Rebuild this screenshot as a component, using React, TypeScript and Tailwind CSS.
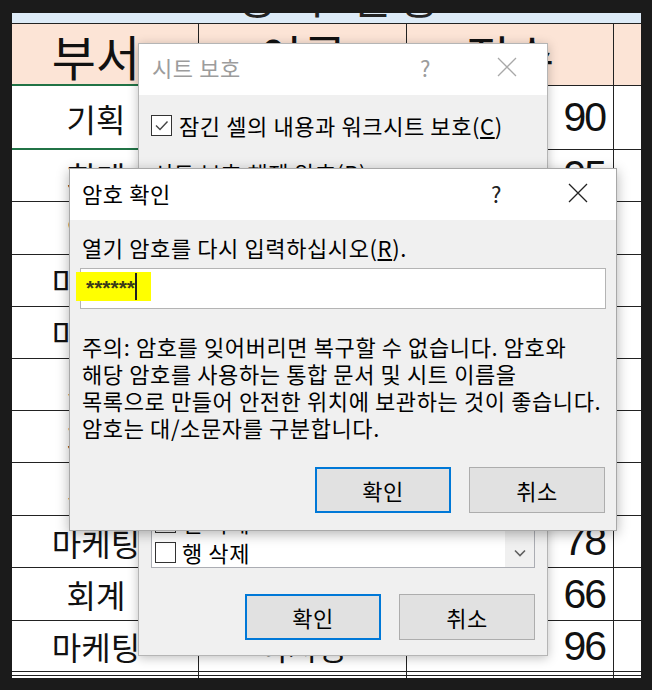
import React from "react";

const KR = "font-['Noto_Sans_CJK_KR','Noto_Sans',sans-serif]";

type Row = { dept: string; name: string; score: number; h: string; selected?: boolean };

const rows: Row[] = [
  { dept: "기획", name: "김민준", score: 90, h: "h-[64px]", selected: true },
  { dept: "회계", name: "이서연", score: 95, h: "h-[52px]" },
  { dept: "인사", name: "박도윤", score: 82, h: "h-[53px]" },
  { dept: "마케팅", name: "최하은", score: 74, h: "h-[52px]" },
  { dept: "마케팅", name: "정시우", score: 88, h: "h-[52px]" },
  { dept: "기획", name: "강지호", score: 91, h: "h-[52px]" },
  { dept: "회계", name: "조서윤", score: 69, h: "h-[52px]" },
  { dept: "기획", name: "윤예준", score: 85, h: "h-[53px]" },
  { dept: "마케팅", name: "장수아", score: 78, h: "h-[52px]" },
  { dept: "회계", name: "임주원", score: 66, h: "h-[53px]" },
  { dept: "마케팅", name: "이지영", score: 96, h: "h-[51px]" },
];

const cols = "grid grid-cols-[187px_208px_207px_27px]";

function CloseIcon({ color }: { color: string }) {
  return (
    <svg width="20" height="20" viewBox="0 0 20 20">
      <path d="M1 1 L19 19 M19 1 L1 19" stroke={color} strokeWidth="1.3" fill="none" />
    </svg>
  );
}

function CheckBox({ checked }: { checked?: boolean }) {
  return (
    <div className="w-[21px] h-[21px] border border-[#333] bg-white flex items-center justify-center shrink-0">
      {checked && (
        <svg width="15" height="15" viewBox="0 0 15 15">
          <path d="M2 7.5 L6 11.5 L13.5 3.5" stroke="#444" strokeWidth="1.4" fill="none" />
        </svg>
      )}
    </div>
  );
}

function Button({ label, primary }: { label: string; primary?: boolean }) {
  return (
    <div
      className={`w-[136px] h-[46px] bg-[#e1e1e1] flex items-center justify-center text-[22px] leading-none text-black ${
        primary ? "border-2 border-[#0078d7]" : "border border-[#adadad]"
      }`}
    >
      {label}
    </div>
  );
}

function Sheet() {
  return (
    <div className={`w-[629px] h-[665px] bg-white overflow-hidden flex flex-col ${KR}`}>
      <div className="h-[11px] bg-[#ddebf7] border-b border-[#222] overflow-hidden flex justify-center">
        <div className="text-[44px] leading-none -mt-[40px] text-[#222] tracking-[8px] pl-[30px]">성적 현황</div>
      </div>
      <div className={`${cols} h-[62px] bg-[#fce4d6] border-b border-[#222]`}>
        <div className="border-r border-[#222] flex items-center justify-center pr-[18px] text-[48px] leading-none text-[#111]">부서</div>
        <div className="border-r border-[#222] flex items-center justify-center text-[48px] leading-none text-[#111]">이름</div>
        <div className="border-r border-[#222] flex items-center justify-center text-[48px] leading-none text-[#111]">점수</div>
        <div />
      </div>
      {rows.map((r, i) => (
        <div key={i} className={`${cols} ${r.h} border-b border-[#222]`}>
          <div className="relative border-r border-[#222] flex items-center justify-center pr-[18px] text-[32px] leading-none text-[#111]">
            {r.dept}
            {r.selected && <div className="absolute inset-x-0 -top-[2px] -bottom-[1px] border-y-2 border-[#217346]" />}
          </div>
          <div className="border-r border-[#222] flex items-center justify-center text-[32px] leading-none text-[#111]">{r.name}</div>
          <div className="border-r border-[#222] flex items-center justify-end pr-[8px] text-[41px] leading-none tracking-[-2px] text-[#111] font-['Liberation_Sans',sans-serif]">
            {r.score}
          </div>
          <div />
        </div>
      ))}
      <div className={`${cols} h-[3px]`}>
        <div className="border-r border-[#222]" />
        <div className="border-r border-[#222]" />
        <div className="border-r border-[#222]" />
        <div />
      </div>
      <div className={`${cols} h-[3px] border-t border-[#222]`}>
        <div className="border-r border-[#222]" />
        <div className="border-r border-[#222]" />
        <div className="border-r border-[#222]" />
        <div />
      </div>
    </div>
  );
}

const listItems = [
  "잠긴 셀 선택",
  "잠기지 않은 셀 선택",
  "셀 서식",
  "열 서식",
  "행 서식",
  "열 삽입",
  "행 삽입",
  "하이퍼링크 삽입",
  "열 삭제",
  "행 삭제",
];

function ProtectDialog() {
  return (
    <div
      className={`absolute left-[138px] top-[43px] w-[410px] h-[613px] bg-[#f0f0f0] border border-[#b5b5b5] shadow-[0_2px_10px_rgba(0,0,0,0.25)] flex flex-col tracking-[0.6px] ${KR}`}
    >
      <div className="h-[51px] bg-white flex items-center pl-[13px] pr-[30px] pb-[5px] shrink-0">
        <span className="text-[22px] leading-none text-[#9c9c9c]">시트 보호</span>
        <span className="ml-auto mr-[66px] text-[22px] leading-none text-[#9c9c9c]">?</span>
        <CloseIcon color="#a8a8a8" />
      </div>
      <div className="flex items-center gap-[7px] pl-[12px] mt-[18px] text-[22px] leading-[24px] text-black whitespace-nowrap">
        <CheckBox checked />
        <span>
          잠긴 셀의 내용과 워크시트 보호(<span className="underline underline-offset-2">C</span>)
        </span>
      </div>
      <div className="pl-[14px] mt-[23px] text-[22px] leading-[24px] text-black whitespace-nowrap">
        시트 보호 해제 암호(<span className="underline">P</span>):
      </div>
      <div className="mx-[24px] mt-[7px] h-[30px] shrink-0 bg-white border border-[#abadb3]" />
      <div className="pl-[14px] mt-[14px] text-[22px] leading-[24px] text-black whitespace-nowrap">
        이 워크시트의 모든 사용자에게 허용할 내용(<span className="underline">O</span>):
      </div>
      <div className="mx-[12px] mt-[71px] h-[238px] shrink-0 bg-white border border-[#abadb3] flex overflow-hidden">
        <div className="flex-1 flex flex-col justify-end overflow-hidden">
          {listItems.map((t) => (
            <div key={t} className="h-[30px] shrink-0 flex items-center gap-[6px] pl-[3px] text-[22px] leading-none text-black">
              <CheckBox />
              <span>{t}</span>
            </div>
          ))}
        </div>
        <div className="w-[29px] bg-[#f0f0f0] flex flex-col justify-end items-center pb-[10px]">
          <svg width="12" height="8" viewBox="0 0 12 8">
            <path d="M1 1.5 L6 6.5 L11 1.5" stroke="#606060" strokeWidth="1.6" fill="none" />
          </svg>
        </div>
      </div>
      <div className="flex justify-end gap-[18px] pr-[12px] mt-[26px]">
        <Button label="확인" primary />
        <Button label="취소" />
      </div>
    </div>
  );
}

function ConfirmDialog() {
  return (
    <div
      className={`absolute left-[69px] top-[168px] w-[548px] h-[363px] bg-[#f0f0f0] border border-[#a8a8a8] shadow-[0_3px_12px_rgba(0,0,0,0.3)] flex flex-col tracking-[0.6px] ${KR}`}
    >
      <div className="h-[51px] bg-white flex items-center pl-[12px] pr-[28px] pb-[4px] shrink-0">
        <span className="text-[22px] leading-none text-black">암호 확인</span>
        <span className="ml-auto mr-[66px] text-[22px] leading-none text-[#222]">?</span>
        <CloseIcon color="#222" />
      </div>
      <div className="pl-[12px] mt-[15px] text-[22px] leading-[24px] text-black whitespace-nowrap">
        열기 암호를 다시 입력하십시오(<span className="underline underline-offset-2">R</span>).
      </div>
      <div className="relative ml-[10px] mr-[10px] mt-[9px] h-[41px] shrink-0 bg-white border border-[#b4b4b4]">
        <div className="absolute -left-[5px] top-[3px] w-[75px] h-[29px] bg-[#ffff00] flex items-center pl-[10px]">
          <span className="font-['Liberation_Sans',sans-serif] font-bold tracking-normal text-[21px] leading-none text-[#3a3a1a] mt-[1px]">******</span>
          <div className="w-[2px] h-[27px] bg-[#222]" />
        </div>
      </div>
      <div className="pl-[12px] mt-[24px] text-[22px] leading-[27px] text-black whitespace-nowrap">
        <div>주의: 암호를 잊어버리면 복구할 수 없습니다. 암호와</div>
        <div>해당 암호를 사용하는 통합 문서 및 시트 이름을</div>
        <div>목록으로 만들어 안전한 위치에 보관하는 것이 좋습니다.</div>
        <div>암호는 대/소문자를 구분합니다.</div>
      </div>
      <div className="flex justify-end gap-[18px] pr-[11px] mt-[26px]">
        <Button label="확인" primary />
        <Button label="취소" />
      </div>
    </div>
  );
}

export default function App() {
  return (
    <div className="relative w-[657px] h-[697px] bg-white overflow-hidden">
      <div className="w-[652px] h-[690px] bg-[#1b1b1b] pl-[12px] pt-[13px]">
        <Sheet />
      </div>
      <ProtectDialog />
      <ConfirmDialog />
    </div>
  );
}
